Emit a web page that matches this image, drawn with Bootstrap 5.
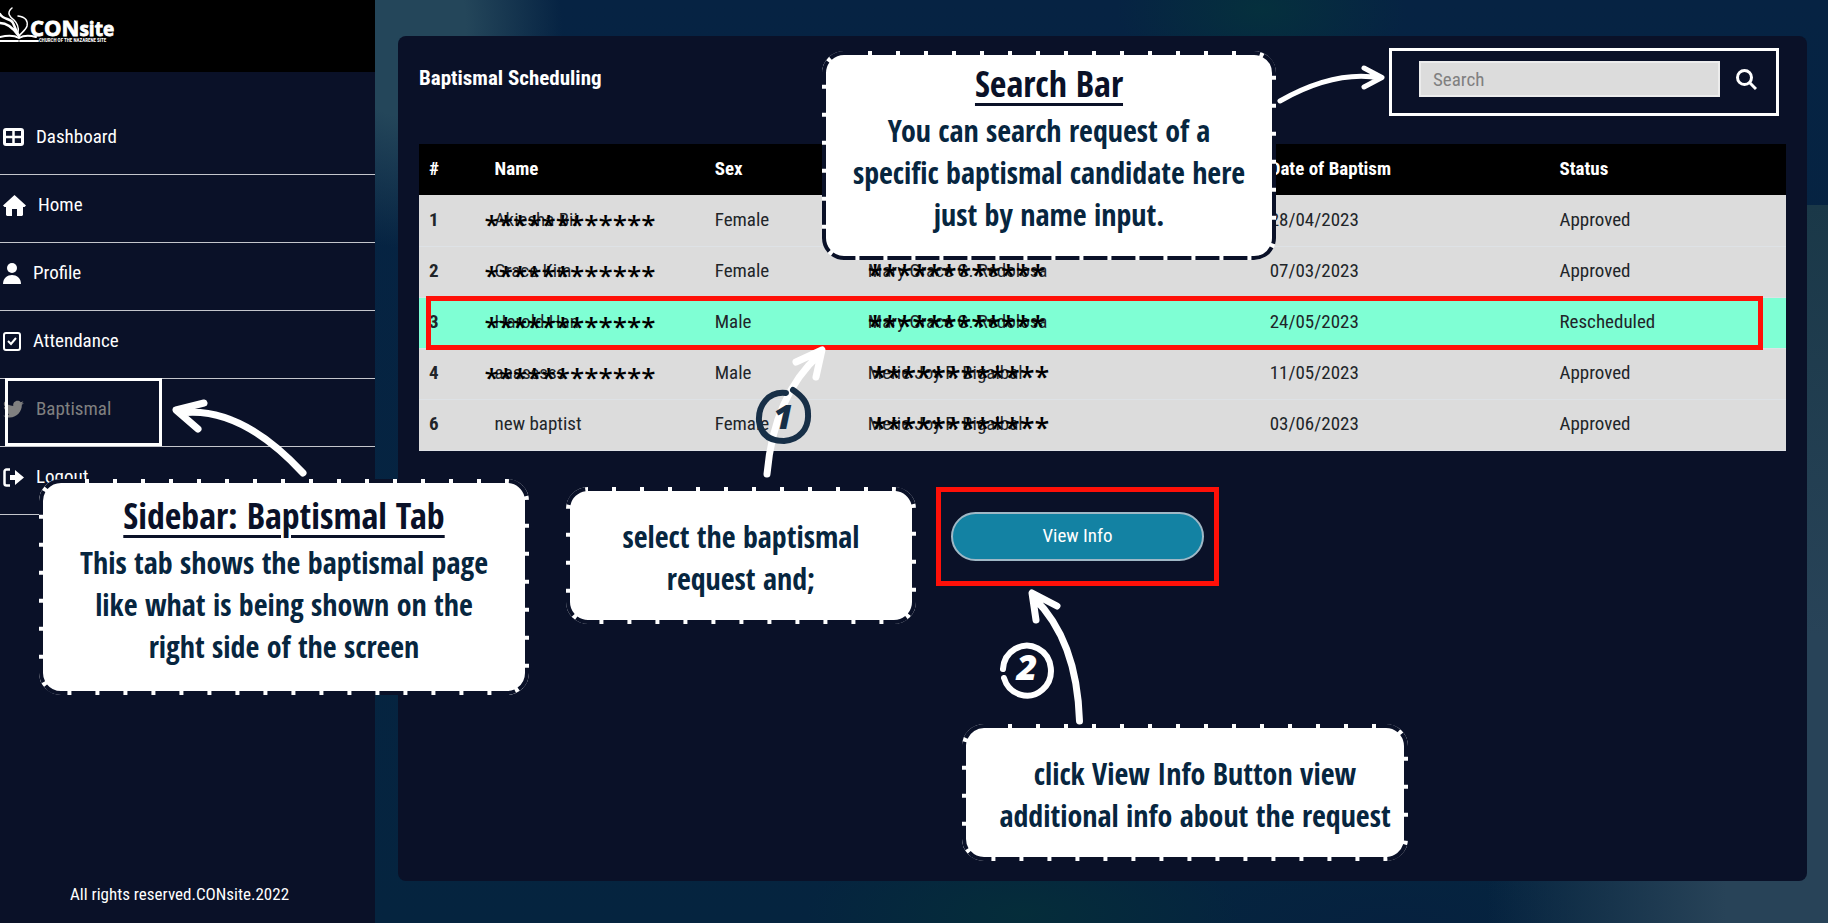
<!DOCTYPE html>
<html lang="en">
<head>
<meta charset="utf-8">
<meta name="viewport" content="width=device-width, initial-scale=1">
<title>CONsite - Baptismal Scheduling</title>
<link href="https://cdn.jsdelivr.net/npm/bootstrap@5.3.0/dist/css/bootstrap.min.css" rel="stylesheet">
<style>
  :root { --navy: #0a1128; --teal: #07263f; --hand: "Open Sans Condensed", "Liberation Sans Narrow", "Liberation Sans", sans-serif; }
  body {
    font-family: "Ubuntu Condensed", "Roboto Condensed", "Liberation Sans Narrow", "Open Sans Condensed", "Liberation Sans", sans-serif;
    font-size: 19px;
    background-color: #05243f;
    background-image:
      radial-gradient(ellipse 160px 220px at 22% 3%, #24465a 40%, transparent 100%),
      radial-gradient(ellipse 160px 90px at 69% 1%, #05303d, transparent 90%),
      radial-gradient(ellipse 240px 90px at 56% 99%, #052d3a, transparent 90%),
      radial-gradient(ellipse 220px 70px at 76% 100%, #06213f, transparent 90%),
      linear-gradient(#062343, #05243f);
  }
  .backdrop-glow { right: 0; top: 205px; bottom: 0; width: 340px; background: linear-gradient(#1a3848, transparent 60%), linear-gradient(to right, transparent, #284358 70%); }
  .side-col { width: 375px; background: var(--navy); }
  .brand { height: 72px; background: #000; }
  .side-nav { margin-top: 35px; }
  .side-link { height: 68px; gap: 12px; padding-left: 3px; padding-bottom: 7px; color: #fff; text-decoration: none; border-bottom: 1px solid #c4c6cc; }
  .side-link.current { color: #808080; }
  .side-foot { font-size: 17px; }
  .panel { background: var(--navy); border-radius: 8px; margin: 36px 21px 42px 23px; padding: 12px 21px; }
  .panel-title { font-size: 21px; margin-top: 18px; }
  .search-frame { width: 390px; height: 68px; border: 3px solid #fff; margin-right: 7px; padding: 10px 19px 0 27px; }
  .search-frame input { height: 36px; background: #dcdcdc; border: 2px solid #ececec; border-radius: 0; padding: 0 12px; font-size: 19px; }
  .search-frame input::placeholder { color: #808080; }
  .grid-table { table-layout: fixed; font-size: 19px; margin: 28px 0 0; }
  .grid-table th, .grid-table td { padding: 0 10px; vertical-align: middle; }
  .grid-table thead th { height: 51px; background: #000; color: #fff; border: 0; }
  .grid-table tbody > tr > * { height: 51px; background: #dcdcdc; color: #212529; border-bottom: 1px solid #dee2e6; white-space: nowrap; }
  .grid-table tbody > tr.picked > * { background: #7fffd4; }
  .row-frame { left: 7px; right: 23px; top: 152px; height: 54px; border: 5px solid #ff1008; }
  .mask { left: -10px; top: -2px; font: 26px/36px "Open Sans", sans-serif; font-weight: 600; color: #000; }
  .mask-mid { left: 0; font-size: 27px; }
  .action-frame { border: 5px solid #ff1008; padding: 20px 10px; margin: 36px 50px 0 0; }
  .action-frame .btn { width: 253px; height: 49px; border-radius: 25px; border: 2px solid #9fb8c6; background: #1382a3; color: #fff; font-size: 19px; }
  .note { background: #fff; border-radius: 22px; color: var(--teal); font-family: var(--hand); font-size: 30px; line-height: 42px; text-align: center; white-space: nowrap; }
  .note h2 { font-family: var(--hand); font-weight: 400; font-size: 36px; line-height: 53px; margin: 0; color: var(--navy); text-decoration: underline; text-decoration-thickness: 3px; text-underline-offset: 6px; }
  .note svg { left: 0; top: 0; width: 100%; height: 100%; }
  .note rect { width: calc(100% - 4px); height: calc(100% - 4px); fill: none; stroke: var(--navy); stroke-width: 4; stroke-dasharray: 24 4; }
  .n-search { left: 822px; top: 51px; width: 454px; height: 209px; padding-top: 6px; }
  .n-side { left: 39px; top: 479px; width: 490px; height: 216px; padding-top: 10px; }
  .n-select { left: 566px; top: 487px; width: 350px; height: 137px; padding-top: 29px; }
  .n-click { left: 962px; top: 724px; width: 446px; height: 137px; padding: 29px 0 0 20px; }
  .tab-frame { left: 5px; top: 378px; width: 157px; height: 68px; border: 3px solid #fff; }
  .arrows { left: 0; top: 0; pointer-events: none; }
</style>
</head>
<body>
<div class="d-flex min-vh-100 position-relative overflow-hidden">
  <div class="backdrop-glow position-absolute"></div>
  <aside class="side-col d-flex flex-column flex-shrink-0 text-white">
    <div class="brand">
      <svg width="140" height="46" viewBox="0 0 140 46" role="img" aria-label="CONsite logo">
        <g fill="none" stroke="#fff" stroke-linecap="round">
          <path d="M0 14c3 6 11 4 13 9 2 4 3 8 6 13M0 23c8 0 13 5 18 12" stroke-width="2.500"/>
          <path d="M12 8c-6 5-2 9 2 12 4 4 5 7 4 12M18 16c8 1 10 5 9 10-1 4-6 7-8 10" stroke-width="1.500"/>
          <path d="M0 37c8-2 14-2 19 1 5-3 10-3 17-1M0 41h18M20 41h18" stroke-width="2"/>
        </g>
        <g fill="#fff" font-family="Open Sans" font-weight="700">
          <text x="30" y="36" font-size="22" stroke="#fff" stroke-width=".8">CON<tspan font-size="19">site</tspan></text>
          <text x="39" y="42" font-family="Roboto Condensed" font-size="5">CHURCH OF THE NAZARENE SITE</text>
        </g>
      </svg>
    </div>
    <nav class="side-nav d-flex flex-column">
      <a class="side-link d-flex align-items-center" href="#"><svg width="21" height="18"><rect x="1.500" y="1.500" width="18" height="15" rx="1.500" fill="none" stroke="#fff" stroke-width="3"/><path d="M10.500 2v14M2 9h17" stroke="#fff" stroke-width="2.500"/></svg>Dashboard</a>
      <a class="side-link d-flex align-items-center" href="#"><svg width="23" height="21"><path fill="#fff" d="M11.500 0L23 10.500l-1.500 1.500H20v8l-1 1h-5v-7H9v7H4l-1-1v-8H1.500L0 10.500z"/></svg>Home</a>
      <a class="side-link d-flex align-items-center" href="#"><svg width="18" height="21" fill="#fff"><circle cx="9" cy="5" r="5"/><path d="M0 21c0-12 18-12 18 0z"/></svg>Profile</a>
      <a class="side-link d-flex align-items-center" href="#"><svg width="18" height="19" fill="none" stroke="#fff" stroke-width="2"><rect x="1" y="1" width="16" height="17" rx="2"/><path d="M5 9l3 3 5-6"/></svg>Attendance</a>
      <a class="side-link current d-flex align-items-center" href="#" aria-current="page"><svg width="21" height="19" viewBox="0 0 512 460" fill="#808080"><path d="M459 115c0 5 0 9 0 14 0 138-105 298-298 298-59 0-114-17-161-47 67 7 124-15 155-40-46-1-85-31-98-73 16 3 31 2 47-2-48-10-84-52-84-104 14 8 30 13 47 14C20 143 5 93 35 35c51 64 128 105 216 110C236 76 288 18 354 18c30 0 57 13 76 33 24-5 46-13 66-25-8 24-24 45-46 58 21-2 42-8 60-16-14 21-31 39-51 47z"/></svg>Baptismal</a>
      <a class="side-link d-flex align-items-center" href="#"><svg width="21" height="19"><path d="M7 1.500H3.500a2 2 0 0 0-2 2v12a2 2 0 0 0 2 2H7" fill="none" stroke="#fff" stroke-width="2.500"/><path fill="#fff" d="M7 7h5V2l9 7.500-9 7.500v-5H7z"/></svg>Logout</a>
    </nav>
    <div class="side-foot mt-auto text-center pb-3 pe-3">All rights reserved.CONsite.2022</div>
  </aside>

  <main class="panel flex-grow-1 position-relative">
    <div class="d-flex justify-content-between">
      <h1 class="panel-title fw-bold text-white mb-0">Baptismal Scheduling</h1>
      <form class="search-frame d-flex">
        <input class="form-control" type="search" placeholder="Search" aria-label="Search">
        <button class="btn border-0 p-0 ms-3 align-self-start mt-2" type="button" aria-label="Run search"><svg class="d-block" width="21" height="21" fill="none" stroke="#fff" stroke-width="3"><circle cx="8.500" cy="8.500" r="7"/><path d="M13.500 13.500l6.500 6.500"/></svg></button>
      </form>
    </div>
    <div class="position-relative">
      <table class="table grid-table">
        <colgroup><col style="width:4.800%"><col style="width:16.100%"><col style="width:11.200%"><col style="width:29.400%"><col style="width:21.200%"><col></colgroup>
        <thead><tr><th>#</th><th>Name</th><th>Sex</th><th></th><th>Date of Baptism</th><th>Status</th></tr></thead>
        <tbody>
          <tr><th>1</th><td><span class="position-relative">Akiesha Bii<span class="mask position-absolute">************</span></span></td><td>Female</td><td></td><td>28/04/2023</td><td>Approved</td></tr>
          <tr><th>2</th><td><span class="position-relative">Grace Kim<span class="mask position-absolute">************</span></span></td><td>Female</td><td><span class="position-relative">Mary Grace G. Redolosa<span class="mask mask-mid position-absolute">************</span></span></td><td>07/03/2023</td><td>Approved</td></tr>
          <tr class="picked"><th>3</th><td><span class="position-relative">Harold Han<span class="mask position-absolute">************</span></span></td><td>Male</td><td><span class="position-relative">Mary Grace G. Redolosa<span class="mask mask-mid position-absolute">************</span></span></td><td>24/05/2023</td><td>Rescheduled</td></tr>
          <tr><th>4</th><td><span class="position-relative">aaasssss<span class="mask position-absolute">************</span></span></td><td>Male</td><td><span class="position-relative">Merie Joy P. Bigalbal<span class="mask mask-mid position-absolute ms-1">************</span></span></td><td>11/05/2023</td><td>Approved</td></tr>
          <tr><th>6</th><td>new baptist</td><td>Female</td><td><span class="position-relative">Merie Joy P. Bigalbal<span class="mask mask-mid position-absolute ms-1">************</span></span></td><td>03/06/2023</td><td>Approved</td></tr>
        </tbody>
      </table>
      <div class="row-frame position-absolute"></div>
    </div>
    <div class="d-flex justify-content-center">
      <div class="action-frame"><button class="btn" type="button">View Info</button></div>
    </div>
  </main>

  <div class="tab-frame position-absolute"></div>
  <section class="note n-search position-absolute"><svg class="position-absolute"><rect x="2" y="2" rx="20"/></svg><h2>Search Bar</h2>You can search request of a<br>specific baptismal candidate here<br>just by name input.</section>
  <section class="note n-side position-absolute"><svg class="position-absolute"><rect x="2" y="2" rx="20"/></svg><h2>Sidebar: Baptismal Tab</h2>This tab shows the baptismal page<br>like what is being shown on the<br>right side of the screen</section>
  <section class="note n-select position-absolute"><svg class="position-absolute"><rect x="2" y="2" rx="20"/></svg>select the baptismal<br>request and;</section>
  <section class="note n-click position-absolute"><svg class="position-absolute"><rect x="2" y="2" rx="20"/></svg>click View Info Button view<br>additional info about the request</section>

  <svg class="arrows position-absolute" width="1440" height="740" fill="none" stroke="#fff" stroke-width="6" stroke-linecap="round" stroke-linejoin="round">
    <path d="M1280 101Q1335 70 1380 78M1364 68L1382 77.500L1364 87" stroke-width="5"/>
    <path d="M303 473Q240 405 180 413M204 403L176 410L198 429" stroke-width="7"/>
    <path d="M767 474Q774 395 820 354M796 362L822 350L816 377" stroke-width="7"/>
    <path d="M1079.500 721Q1077 640 1034 598M1057 606L1032 593L1036 620" stroke-width="7"/>
    <path d="M786 393C768 391 758 406 759 421C761 436 771 441 784 441C799 440 809 429 808 414C808 403 803 397 793 390" stroke="#172f47"/>
    <path d="M1003 669A24 25 0 1 1 1004 678"/>
    <g stroke="none" font-family="Open Sans" font-weight="800" font-style="italic" text-anchor="middle">
      <text x="783" y="429" font-size="34" fill="#172f47">1</text>
      <text x="1027" y="680" font-size="36" fill="#fff">2</text>
    </g>
  </svg>
</div>
<script src="https://cdn.jsdelivr.net/npm/bootstrap@5.3.0/dist/js/bootstrap.bundle.min.js"></script>
</body>
</html>
